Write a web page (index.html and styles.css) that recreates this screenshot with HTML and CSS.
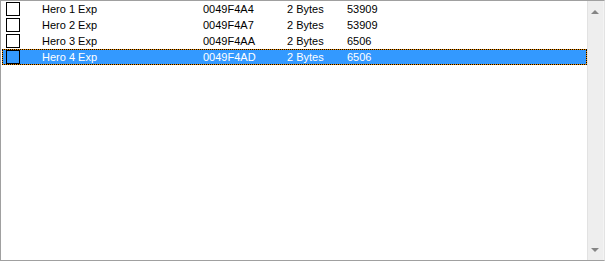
FILE: index.html
```
<!DOCTYPE html>
<html lang="en">
<head>
    <meta charset="UTF-8">
    <title>Cheat List</title>
    <link rel="stylesheet" href="styles.css">
</head>
<body>
    <div class="listview">
        <div class="rows">
            <div class="row">
                <span class="check"></span>
                <span class="col name">Hero 1 Exp</span>
                <span class="col addr">0049F4A4</span>
                <span class="col type">2 Bytes</span>
                <span class="col value">53909</span>
            </div>
            <div class="row">
                <span class="check"></span>
                <span class="col name">Hero 2 Exp</span>
                <span class="col addr">0049F4A7</span>
                <span class="col type">2 Bytes</span>
                <span class="col value">53909</span>
            </div>
            <div class="row">
                <span class="check"></span>
                <span class="col name">Hero 3 Exp</span>
                <span class="col addr">0049F4AA</span>
                <span class="col type">2 Bytes</span>
                <span class="col value">6506</span>
            </div>
            <div class="row selected">
                <span class="check"></span>
                <span class="col name">Hero 4 Exp</span>
                <span class="col addr">0049F4AD</span>
                <span class="col type">2 Bytes</span>
                <span class="col value">6506</span>
            </div>
        </div>
        <!-- vertical scrollbar -->
        <div class="scrollbar">
            <span class="arrow up"></span>
            <span class="arrow down"></span>
        </div>
    </div>
</body>
</html>
```
FILE: styles.css
```
body {
    margin: 0;
    background: #f0f0f0;
    font-family: "Liberation Sans", Arial, sans-serif;
    font-size: 11px;
}

.listview {
    width: 605px;
    height: 261px;
    box-sizing: border-box;
    border: 1px solid #a0a0a0;
    border-right-color: #e3e3e3;
    background: #ffffff;
    display: flex;
}

.rows {
    flex: 1;
    padding-left: 1px;
}

.row {
    height: 16px;
    display: flex;
    align-items: center;
    color: #000000;
    box-sizing: border-box;
    border: 1px solid transparent;
}

.row.selected {
    color: #ffffff;
    border: 1px dotted #000000;
    background: linear-gradient(#3399ff, #3399ff) padding-box, border-box #f08c00;
}

.check {
    width: 14px;
    height: 14px;
    box-sizing: border-box;
    border: 1px solid #000000;
    margin-left: 3px;
    flex-shrink: 0;
}

.col {
    line-height: 14px;
    white-space: nowrap;
}

.name {
    margin-left: 22px;
    width: 161px;
}

.addr {
    width: 84px;
}

.type {
    width: 60px;
}

.scrollbar {
    width: 17px;
    box-sizing: border-box;
    background: #eeeeee;
    border-left: 1px solid #e2e2e2;
    border-right: 1px solid #f4f4f4;
    position: relative;
}

.arrow {
    position: absolute;
    left: 3px;
    width: 0;
    height: 0;
    border-left: 4px solid transparent;
    border-right: 4px solid transparent;
}

.arrow.up {
    top: 9px;
    border-bottom: 4px solid #858585;
}

.arrow.down {
    bottom: 8px;
    border-top: 4px solid #858585;
}
```
